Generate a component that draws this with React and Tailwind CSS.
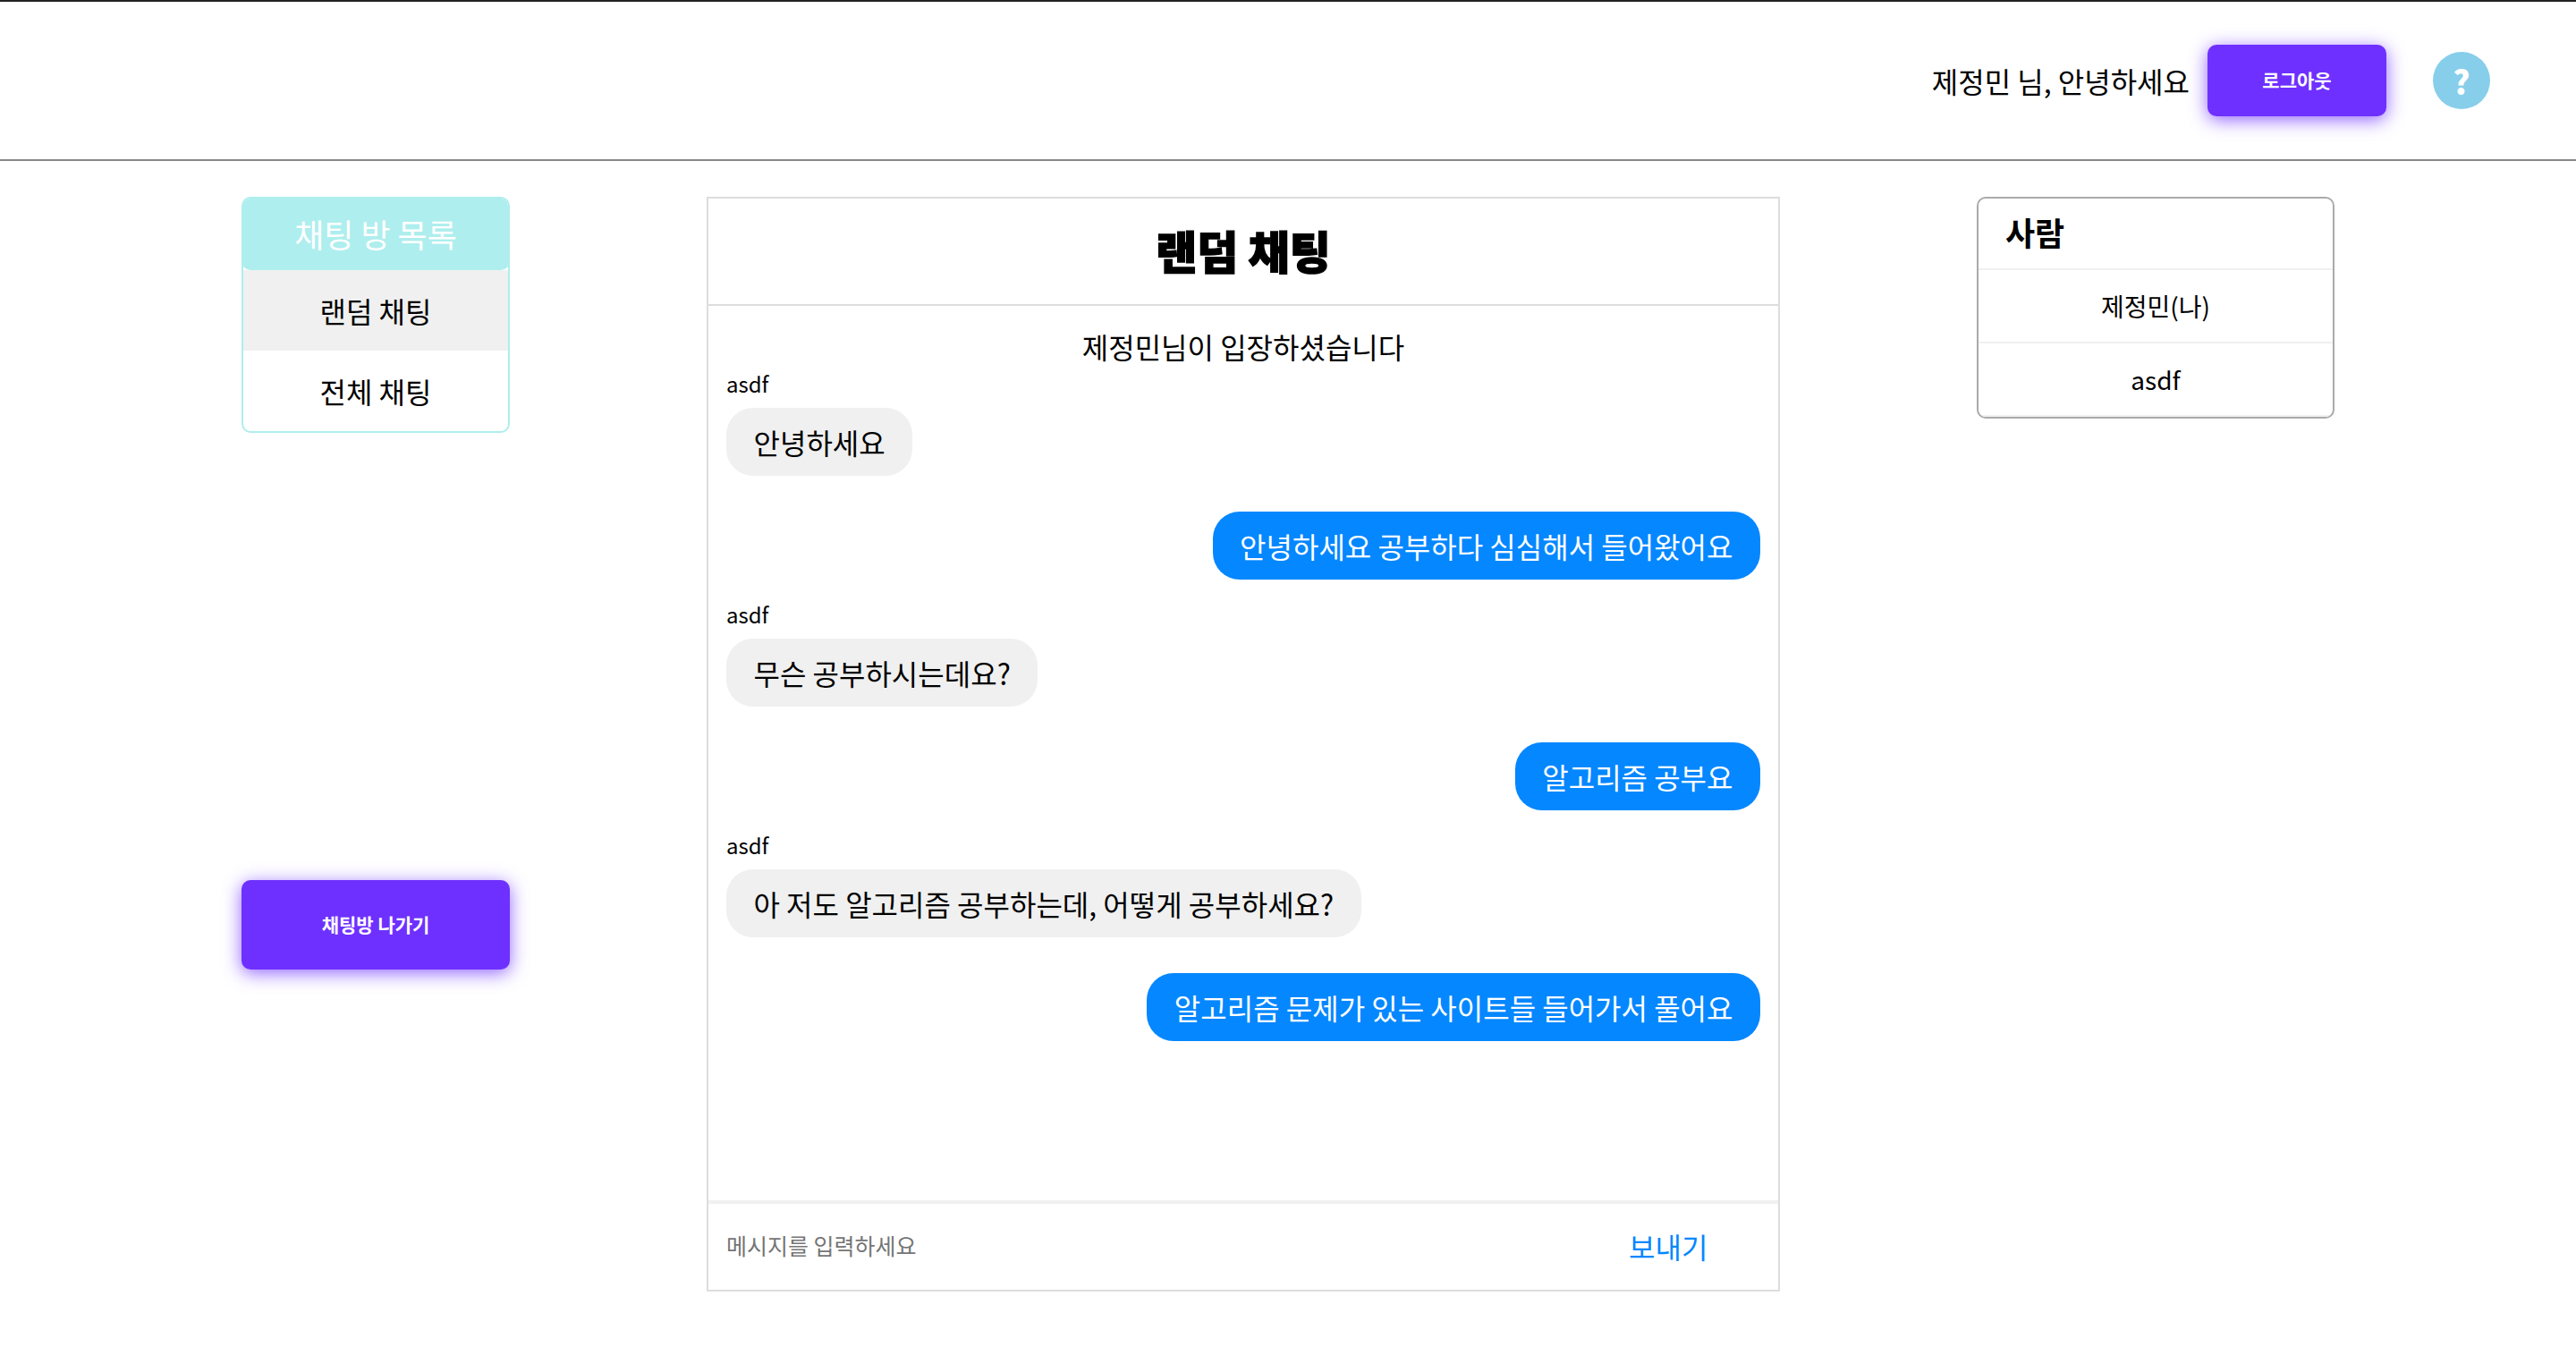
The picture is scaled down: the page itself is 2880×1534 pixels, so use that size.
const fontStack = { fontFamily: '"Noto Sans CJK KR", "Noto Sans", sans-serif' };

const messages = [
  { mine: false, name: 'asdf', text: '안녕하세요' },
  { mine: true, text: '안녕하세요 공부하다 심심해서 들어왔어요' },
  { mine: false, name: 'asdf', text: '무슨 공부하시는데요?' },
  { mine: true, text: '알고리즘 공부요' },
  { mine: false, name: 'asdf', text: '아 저도 알고리즘 공부하는데, 어떻게 공부하세요?' },
  { mine: true, text: '알고리즘 문제가 있는 사이트들 들어가서 풀어요' },
];

const PurpleButton = ({ className, children }) => (
  <button className={`bg-[#6e30ff] text-white text-[21px] font-bold rounded-[10px] shadow-[0_4px_20px_rgba(110,48,255,0.75)] flex items-center justify-center ${className}`}>
    {children}
  </button>
);

const Header = () => (
  <header className="h-[180px] border-t-2 border-t-[#222222] border-b-2 border-b-[#888888] flex items-center justify-end pr-[96px]">
    <span className="text-[32px] leading-[48px] text-black">제정민 님, 안녕하세요</span>
    <PurpleButton className="w-[200px] h-[80px] ml-[20px]">로그아웃</PurpleButton>
    <button className="w-[64px] h-[64px] ml-[52px] rounded-full bg-[#87ceeb] text-white text-[36px] font-black flex items-center justify-center">?</button>
  </header>
);

const RoomList = () => (
  <aside className="w-[300px] shrink-0">
    <div className="h-[264px] border-2 border-[#afeeee] rounded-[10px] overflow-hidden">
      <div className="h-[82px] -mx-[2px] -mt-[2px] flex items-center justify-center bg-[#afeeee] text-white text-[36px] rounded-[10px]">채팅 방 목록</div>
      <div className="h-[90px] -mx-[2px] flex items-center justify-center bg-[#f0f0f0] text-[32px] text-black">랜덤 채팅</div>
      <div className="h-[90px] flex items-center justify-center text-[32px] text-black">전체 채팅</div>
    </div>
    <PurpleButton className="w-[300px] h-[100px] mt-[500px]">채팅방 나가기</PurpleButton>
  </aside>
);

const Message = ({ mine, name, text }) => (
  <div className={`flex flex-col ${mine ? 'items-end mb-[26px]' : 'items-start mb-[40px]'}`}>
    {name && <div className="h-[26px] mb-[14px] text-[24px] leading-[26px] text-black">{name}</div>}
    <div className={`h-[76px] px-[30.5px] rounded-[30px] flex items-center text-[32px] ${mine ? 'bg-[#0587ff] text-white' : 'bg-[#f0f0f0] text-black'}`}>
      {text}
    </div>
  </div>
);

const ChatRoom = () => (
  <main className="w-[1200px] h-[1224px] ml-[220px] shrink-0 border-2 border-[#dddddd] flex flex-col">
    <div className="h-[114px] pb-[4px] border-b-2 border-[#dddddd] box-content flex items-center justify-center text-[50px] font-black text-black [-webkit-text-stroke:1.5px_#000]">랜덤 채팅</div>
    <div className="flex-1 px-[20px] pt-[20px]">
      <div className="h-[54px] text-center text-[32px] leading-[50px] text-black">제정민님이 입장하셨습니다</div>
      {messages.map((m, i) => <Message key={i} {...m} />)}
    </div>
    <div className="h-[94px] pb-[2px] border-t-4 border-[#f0f0f0] box-content flex items-center pl-[20px]">
      <input className="flex-1 text-[25px] outline-none placeholder:text-[#757575]" placeholder="메시지를 입력하세요" style={fontStack} />
      <button className="w-[165px] mr-[2px] text-left text-[32px] text-[#0587ff]">보내기</button>
    </div>
  </main>
);

const People = () => (
  <aside className="w-[400px] h-[248px] ml-[220px] shrink-0 border-2 border-[#aaaaaa] rounded-[10px] overflow-hidden">
    <div className="h-[80px] pb-[4px] border-b-2 border-[#f0f0f0] flex items-center pl-[30px] text-[36px] font-bold text-black">사람</div>
    <div className="h-[80px] border-b-2 border-[#f0f0f0] box-content flex items-center justify-center text-[28px] text-black">제정민(나)</div>
    <div className="h-[80px] border-b-2 border-[#f0f0f0] box-content flex items-center justify-center text-[28px] text-black">asdf</div>
  </aside>
);

export default function App() {
  return (
    <div className="min-h-[1534px] bg-white" style={fontStack}>
      <Header />
      <div className="flex items-start pl-[270px] pt-[40px]">
        <RoomList />
        <ChatRoom />
        <People />
      </div>
    </div>
  );
}
